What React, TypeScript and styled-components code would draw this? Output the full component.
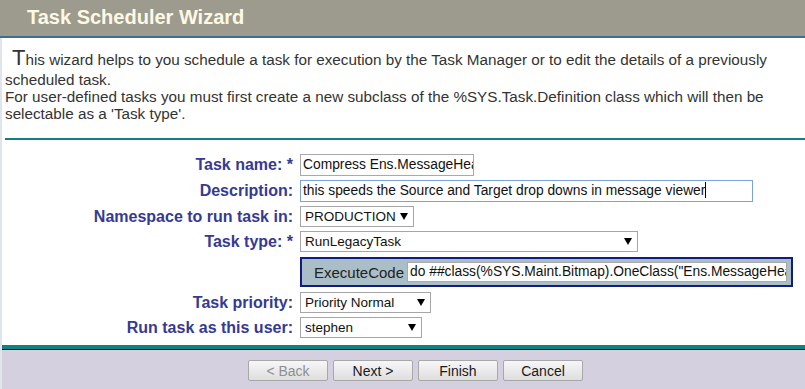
import styled, { createGlobalStyle } from 'styled-components';

const GlobalStyle = createGlobalStyle`
  html, body {
    margin: 0;
    padding: 0;
    background: #ffffff;
  }
  body {
    font-family: 'Liberation Sans', Arial, sans-serif;
  }
`;

const Page = styled.div`
  width: 805px;
  height: 389px;
  display: flex;
  flex-direction: column;
  overflow: hidden;
  background: #ffffff;
`;

const Header = styled.header`
  height: 38px;
  box-sizing: border-box;
  display: flex;
  align-items: center;
  padding: 0 0 2px 27px;
  background: #9d9b8e;
  border-bottom: 2px solid #3e6f90;
`;

const Title = styled.h1`
  margin: 0;
  font-size: 20px;
  font-weight: bold;
  color: #fdf9e4;
`;

const Body = styled.div`
  flex: 1;
  display: flex;
  flex-direction: column;
  border-left: 2px solid #e0e4eb;
`;

const Intro = styled.div`
  padding: 7px 30px 0 3px;
  font-size: 15.25px;
  color: #333333;
`;

const BigLetter = styled.span`
  margin-left: 7px;
  font-size: 22px;
`;

const Divider = styled.hr`
  margin: 16px 0 0 3px;
  height: 2px;
  border: 0;
  background: #13807f;
`;

const Form = styled.div`
  display: grid;
  grid-template-columns: 291px auto;
  column-gap: 7px;
  row-gap: 4px;
  padding-top: 14px;
  align-items: center;
  justify-items: start;
`;

const Label = styled.label`
  justify-self: end;
  font-size: 16px;
  font-weight: bold;
  color: #353a92;
  white-space: nowrap;
`;

const TextField = styled.div<{ $w: number; $focus?: boolean }>`
  width: ${(p) => p.$w}px;
  height: 22px;
  box-sizing: border-box;
  padding: 0 2px;
  border: 1px solid ${(p) => (p.$focus ? '#7aa3dc' : '#a9a9a9')};
  background: #ffffff;
  font-size: 13.8px;
  line-height: 20px;
  color: #111111;
  white-space: nowrap;
  overflow: hidden;
`;

const Caret = styled.span`
  display: inline-block;
  width: 1px;
  height: 16px;
  vertical-align: -3px;
  background: #000000;
`;

const SelectBox = styled.div<{ $w: number }>`
  width: ${(p) => p.$w}px;
  height: 21px;
  box-sizing: border-box;
  display: flex;
  align-items: center;
  justify-content: space-between;
  padding: 0 5px 0 4px;
  border: 1px solid #a6a6a6;
  background: #ffffff;
  font-size: 13.5px;
  color: #111111;
`;

const Arrow = styled.span`
  width: 0;
  height: 0;
  border-left: 4px solid transparent;
  border-right: 4px solid transparent;
  border-top: 7px solid #000000;
`;

const CodePanel = styled.div`
  width: 493px;
  height: 30px;
  margin: 1px 0;
  box-sizing: border-box;
  display: flex;
  align-items: center;
  gap: 3px;
  padding: 0 4px 0 12px;
  border: 2px solid #101c80;
  background: #a9bec6;
  font-size: 15px;
  color: #222222;
`;

const CodeInput = styled.div`
  flex: 1;
  height: 20px;
  box-sizing: border-box;
  padding: 0 2px;
  border: 1px solid #a9a9a9;
  background: #ffffff;
  font-size: 13.8px;
  line-height: 18px;
  white-space: nowrap;
  overflow: hidden;
  color: #111111;
`;

const Footer = styled.footer`
  margin-top: auto;
  height: 44px;
  box-sizing: border-box;
  display: flex;
  gap: 5px;
  padding: 11px 0 0 246px;
  border-top: 4px solid #0e8280;
  box-shadow: inset 0 1px 0 #111111;
  background: #d4d0e0;
`;

const Button = styled.button<{ $disabled?: boolean }>`
  width: 80px;
  height: 21px;
  padding: 0;
  border: 1px solid #a8a8a8;
  border-radius: 2px;
  background: linear-gradient(#f7f7f7, #dedede);
  font-family: 'Liberation Sans', Arial, sans-serif;
  font-size: 14px;
  color: ${(p) => (p.$disabled ? '#8f8f8f' : '#1a1a1a')};
`;

function Select({ width, value }: { width: number; value: string }) {
  return (
    <SelectBox $w={width}>
      <span>{value}</span>
      <Arrow />
    </SelectBox>
  );
}

export default function App() {
  return (
    <Page>
      <GlobalStyle />
      <Header>
        <Title>Task Scheduler Wizard</Title>
      </Header>
      <Body>
        <Intro>
          <BigLetter>T</BigLetter>his wizard helps to you schedule a task for execution by the Task
          Manager or to edit the details of a previously scheduled task.
          <br />
          For user-defined tasks you must first create a new subclass of the %SYS.Task.Definition
          class which will then be selectable as a 'Task type'.
        </Intro>
        <Divider />
        <Form>
          <Label>Task name: *</Label>
          <TextField $w={174}>Compress Ens.MessageHeader Bitmaps</TextField>

          <Label>Description:</Label>
          <TextField $w={453} $focus>
            this speeds the Source and Target drop downs in message viewer
            <Caret />
          </TextField>

          <Label>Namespace to run task in:</Label>
          <Select width={114} value="PRODUCTION" />

          <Label>Task type: *</Label>
          <Select width={338} value="RunLegacyTask" />

          <span />
          <CodePanel>
            ExecuteCode
            <CodeInput>do ##class(%SYS.Maint.Bitmap).OneClass("Ens.MessageHeader")</CodeInput>
          </CodePanel>

          <Label>Task priority:</Label>
          <Select width={131} value="Priority Normal" />

          <Label>Run task as this user:</Label>
          <Select width={122} value="stephen" />
        </Form>
        <Footer>
          <Button $disabled disabled>
            &lt; Back
          </Button>
          <Button>Next &gt;</Button>
          <Button>Finish</Button>
          <Button>Cancel</Button>
        </Footer>
      </Body>
    </Page>
  );
}
